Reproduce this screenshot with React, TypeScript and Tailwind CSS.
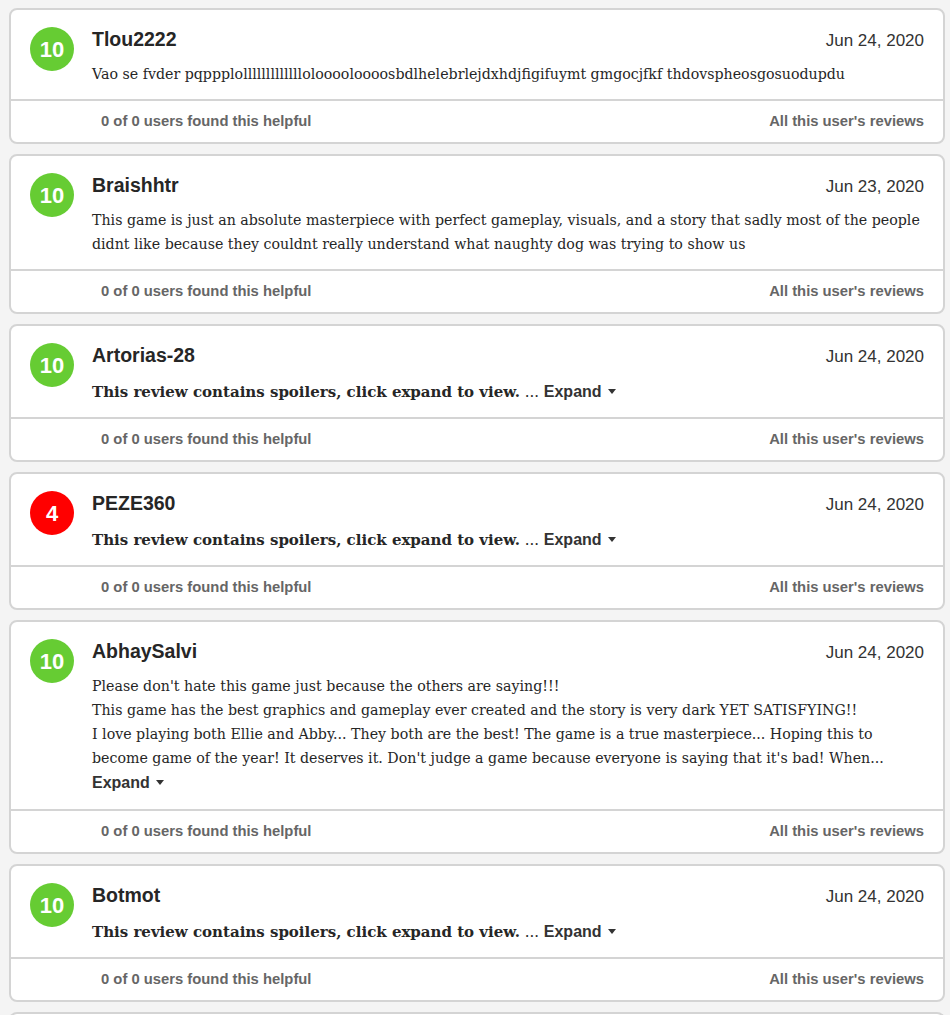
import React from "react";

type Review = {
  name: string;
  score: number;
  date: string;
  body?: string[];
  spoiler?: boolean;
  truncated?: boolean;
};

const reviews: Review[] = [
  {
    name: "Tlou2222",
    score: 10,
    date: "Jun 24, 2020",
    body: ["Vao se fvder pqppplolllllllllllllolooooloooosbdlhelebrlejdxhdjfigifuymt gmgocjfkf thdovspheosgosuodupdu"],
  },
  {
    name: "Braishhtr",
    score: 10,
    date: "Jun 23, 2020",
    body: [
      "This game is just an absolute masterpiece with perfect gameplay, visuals, and a story that sadly most of the people",
      "didnt like because they couldnt really understand what naughty dog was trying to show us",
    ],
  },
  { name: "Artorias-28", score: 10, date: "Jun 24, 2020", spoiler: true },
  { name: "PEZE360", score: 4, date: "Jun 24, 2020", spoiler: true },
  {
    name: "AbhaySalvi",
    score: 10,
    date: "Jun 24, 2020",
    truncated: true,
    body: [
      "Please don't hate this game just because the others are saying!!!",
      "This game has the best graphics and gameplay ever created and the story is very dark YET SATISFYING!!",
      "I love playing both Ellie and Abby... They both are the best! The game is a true masterpiece... Hoping this to",
      "become game of the year! It deserves it. Don't judge a game because everyone is saying that it's bad! When...",
    ],
  },
  { name: "Botmot", score: 10, date: "Jun 24, 2020", spoiler: true },
];

const sans = "font-['Liberation_Sans',Arial,sans-serif]";
const serif = "font-['DejaVu_Serif',Georgia,serif]";

function Caret() {
  return <span className="ml-[6px] inline-block align-middle border-x-[4px] border-t-[5px] border-x-transparent border-t-[#333] mb-[3px]" />;
}

function ExpandLink() {
  return (
    <span className={`${sans} font-bold text-[16px] text-[#333]`}>
      Expand
      <Caret />
    </span>
  );
}

function ReviewCard({ r }: { r: Review }) {
  return (
    <div className="rounded-[8px] border-2 border-[#d4d4d4] bg-white">
      <div className="flex pl-[19px] pr-[19px] pt-[16px] pb-[13px]">
        <div
          className={`${sans} w-[44px] h-[44px] shrink-0 rounded-full flex items-center justify-center text-white font-bold text-[22px] mt-[1px] ${
            r.score >= 7 ? "bg-[#66cc33]" : "bg-[#ff0000]"
          }`}
        >
          {r.score}
        </div>
        <div className="ml-[18px] flex-1 min-w-0">
          <div className="flex items-start justify-between">
            <div className={`${sans} font-bold text-[19.5px] leading-[26px] text-[#262626]`}>{r.name}</div>
            <div className={`${sans} text-[17px] leading-[26px] text-[#333] mt-[2px]`}>{r.date}</div>
          </div>
          {r.spoiler ? (
            <div className={`mt-[9px] text-[15px] leading-[24px] text-[#262626]`}>
              <span className={`${serif} font-bold`}>This review contains spoilers, click expand to view.</span>
              <span className={`${serif}`}> ... </span>
              <ExpandLink />
            </div>
          ) : (
            <div className={`${serif} mt-[8px] text-[14.2px] leading-[24px] text-[#262626]`}>
              {r.body?.map((line, i) => (
                <div key={i} className="whitespace-nowrap">
                  {line}
                </div>
              ))}
              {r.truncated && (
                <div className="leading-[26px]">
                  <ExpandLink />
                </div>
              )}
            </div>
          )}
        </div>
      </div>
      <div className={`${sans} border-t-2 border-[#d4d4d4] h-[43px] flex items-center justify-between pl-[90px] pr-[19px] text-[14.8px] font-bold text-[#666]`}>
        <span>0 of 0 users found this helpful</span>
        <span>All this user's reviews</span>
      </div>
    </div>
  );
}

export default function App() {
  return (
    <div className="min-h-screen bg-[#f4f4f4] pt-[8px] pl-[9px] pr-[5px]">
      <div className="flex flex-col gap-[10px]">
        {reviews.map((r) => (
          <ReviewCard key={r.name} r={r} />
        ))}
        <div className="h-[40px] rounded-t-[8px] border-2 border-b-0 border-[#d4d4d4] bg-white" />
      </div>
    </div>
  );
}
